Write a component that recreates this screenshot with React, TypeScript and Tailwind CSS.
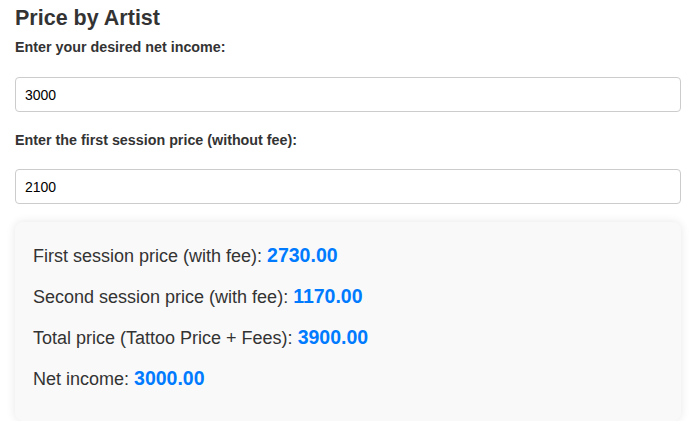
import { useState } from 'react';

const Row = ({ label, value }: { label: string; value: string }) => (
	<div className="h-[41px] leading-[41px] text-[18px] text-[#333]">
		{label}: <span className="text-[19.5px] font-bold text-[#007bff]">{value}</span>
	</div>
);

const App = () => {
	const [netIncome, setNetIncome] = useState('3000');
	const [firstPrice, setFirstPrice] = useState('2100');

	const net = parseFloat(netIncome) || 0;
	const first = parseFloat(firstPrice) || 0;
	const total = net * 1.3;
	const firstWithFee = first * 1.3;
	const secondWithFee = total - firstWithFee;

	return (
		<div
			className="pl-[15px] pr-[13px] pt-[6px] text-[#333]"
			style={{ fontFamily: '"Liberation Sans", Arial, sans-serif' }}
		>
			<h2 className="text-[21.5px] font-bold leading-[25px]">Price by Artist</h2>
			<label className="mt-[8px] block text-[14.3px] font-bold leading-[17px]">
				Enter your desired net income:
			</label>
			<input
				className="mt-[21px] block h-[35px] w-full rounded-[4px] border border-[#ccc] px-[9px] text-[14px] text-black outline-none"
				value={netIncome}
				onChange={(e) => setNetIncome(e.target.value)}
			/>
			<label className="mt-[20px] block text-[14.3px] font-bold leading-[17px]">
				Enter the first session price (without fee):
			</label>
			<input
				className="mt-[20px] block h-[35px] w-full rounded-[4px] border border-[#ccc] px-[9px] text-[14px] text-black outline-none"
				value={firstPrice}
				onChange={(e) => setFirstPrice(e.target.value)}
			/>
			<div className="mt-[18px] rounded-[8px] bg-[#f9f9f9] pb-[22px] pl-[18px] pt-[13px] shadow-[0_0_10px_rgba(0,0,0,0.1)]">
				<Row label="First session price (with fee)" value={firstWithFee.toFixed(2)} />
				<Row label="Second session price (with fee)" value={secondWithFee.toFixed(2)} />
				<Row label="Total price (Tattoo Price + Fees)" value={total.toFixed(2)} />
				<Row label="Net income" value={net.toFixed(2)} />
			</div>
		</div>
	);
};

export default App;
